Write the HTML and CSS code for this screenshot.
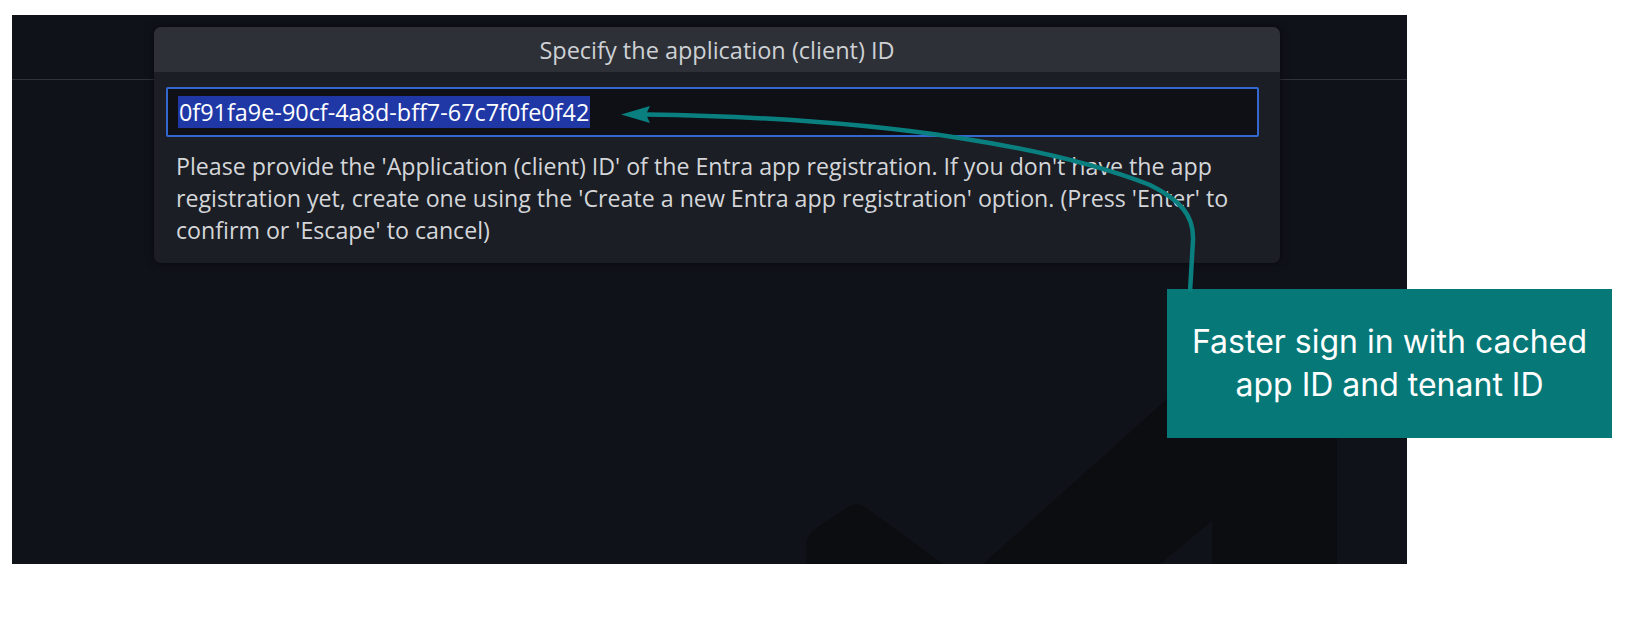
FILE: index.html
```html
<!DOCTYPE html>
<html lang="en">
<head>
<meta charset="utf-8">
<title>Specify the application (client) ID</title>
<link rel="stylesheet" href="styles.css">
</head>
<body>
<div class="page">
  <div class="screen">
    <div class="titlebar"></div>
    <svg class="watermark" width="1395" height="549" viewBox="12 15 1395 549" aria-hidden="true">
      <polygon class="wm-dark" points="983,564 1283,295 1337,295 1337,564"/>
      <polygon class="wm-bg" points="1160,564 1212,521 1212,564"/>
      <path class="wm-dark" d="M 806 564 L 806 546 Q 806 538 812 531 L 846 508 Q 857 500 868 509 L 943 564 Z"/>
    </svg>
    <div class="dialog">
      <div class="dialog-header">Specify the application (client) ID</div>
      <div class="dialog-body">
        <div class="input"><span class="selected">0f91fa9e-90cf-4a8d-bff7-67c7f0fe0f42</span></div>
        <p class="message">Please provide the 'Application (client) ID' of the Entra app registration. If you don't have the app registration yet, create one using the 'Create a new Entra app registration' option. (Press 'Enter' to confirm or 'Escape' to cancel)</p>
      </div>
    </div>
  </div>
  <div class="callout">Faster sign in with cached<br>app ID and tenant ID</div>
  <svg class="arrow" width="1642" height="636" viewBox="0 0 1642 636" aria-hidden="true">
    <path class="arrow-line" d="M 1190 292 L 1193 240 C 1194 215, 1180 200, 1150 185 C 1060 150, 900 118, 646 114.5"/>
    <polygon class="arrow-head" points="621,114.5 650,106 646,114.5 650,123"/>
  </svg>
</div>
</body>
</html>
```

FILE: styles.css
```css
html, body {
  margin: 0;
  padding: 0;
  background: #ffffff;
}

.page {
  position: relative;
  width: 1642px;
  height: 636px;
  padding: 15px 0 0 12px;
  box-sizing: border-box;
}

.screen {
  position: relative;
  width: 1395px;
  height: 549px;
  background: #10121a;
  overflow: hidden;
}

.titlebar {
  height: 64px;
  border-bottom: 1px solid #30333a;
}

.watermark {
  position: absolute;
  left: 0;
  top: 0;
}

.wm-dark {
  fill: #0c0d11;
}

.wm-bg {
  fill: #10121a;
}

.dialog {
  position: absolute;
  left: 142px;
  top: 12px;
  width: 1126px;
  background: #1b1e24;
  border-radius: 7px;
  overflow: hidden;
  box-shadow: 0 0 8px rgba(0, 0, 0, 0.55);
}

.dialog-header {
  height: 45px;
  background: #2e3037;
  color: #cdd0d4;
  font-family: "Open Sans", "Noto Sans", sans-serif;
  font-size: 23.5px;
  display: flex;
  align-items: center;
  justify-content: center;
}

.dialog-body {
  padding: 15px 21px 17px 12px;
}

.input {
  height: 50px;
  box-sizing: border-box;
  border: 2px solid #3468cf;
  border-radius: 2px;
  background: #0e1015;
  padding: 0 10px;
  display: flex;
  align-items: center;
}

.selected {
  background: #1f38a6;
  color: #ffffff;
  font-family: "Open Sans", "Noto Sans", sans-serif;
  font-size: 23.4px;
  line-height: 32px;
  padding: 0 1px;
}

.message {
  margin: 13px 0 0 0;
  padding-left: 10px;
  color: #d4d6da;
  font-family: "Open Sans", "Noto Sans", sans-serif;
  font-size: 23.2px;
  line-height: 32px;
}

.callout {
  position: absolute;
  left: 1167px;
  top: 289px;
  width: 445px;
  height: 149px;
  background: #067878;
  color: #ffffff;
  font-family: Inter, "Open Sans", sans-serif;
  font-size: 32px;
  line-height: 42.5px;
  text-align: center;
  display: flex;
  align-items: center;
  justify-content: center;
}

.arrow {
  position: absolute;
  left: 0;
  top: 0;
  pointer-events: none;
}

.arrow-line {
  fill: none;
  stroke: #0a7f7f;
  stroke-width: 4.5;
}

.arrow-head {
  fill: #0a7f7f;
}
```
